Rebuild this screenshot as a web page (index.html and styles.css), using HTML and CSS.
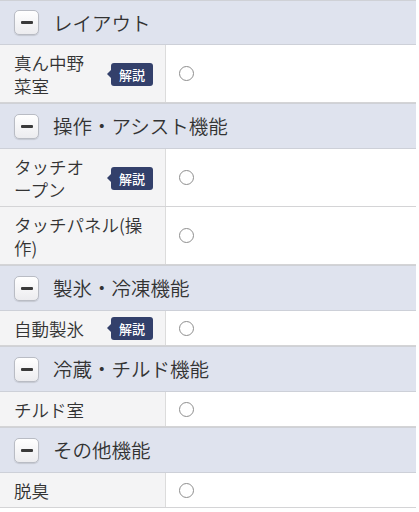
FILE: index.html
```html
<!DOCTYPE html>
<html lang="ja">
<head>
<meta charset="utf-8">
<link rel="stylesheet" href="styles.css">
</head>
<body>
<div class="spec">
  <div class="group">
    <div class="head"><span class="toggle"><span class="bar"></span></span><span class="title">レイアウト</span></div>
    <div class="row"><div class="label"><span class="name">真ん中野菜室</span><span class="badge">解説</span></div><div class="value"><span class="circle"></span></div></div>
  </div>
  <div class="group">
    <div class="head"><span class="toggle"><span class="bar"></span></span><span class="title">操作・アシスト機能</span></div>
    <div class="row"><div class="label"><span class="name">タッチオープン</span><span class="badge">解説</span></div><div class="value"><span class="circle"></span></div></div>
    <div class="row"><div class="label"><span class="name">タッチパネル(操作)</span></div><div class="value"><span class="circle"></span></div></div>
  </div>
  <div class="group">
    <div class="head"><span class="toggle"><span class="bar"></span></span><span class="title">製氷・冷凍機能</span></div>
    <div class="row"><div class="label"><span class="name">自動製氷</span><span class="badge">解説</span></div><div class="value"><span class="circle"></span></div></div>
  </div>
  <div class="group">
    <div class="head"><span class="toggle"><span class="bar"></span></span><span class="title">冷蔵・チルド機能</span></div>
    <div class="row"><div class="label"><span class="name">チルド室</span></div><div class="value"><span class="circle"></span></div></div>
  </div>
  <div class="group">
    <div class="head"><span class="toggle"><span class="bar"></span></span><span class="title">その他機能</span></div>
    <div class="row"><div class="label"><span class="name">脱臭</span></div><div class="value"><span class="circle"></span></div></div>
  </div>
</div>
</body>
</html>
```
FILE: styles.css
```css
html, body {
  margin: 0;
  padding: 0;
  background: #ffffff;
}
body {
  font-family: "Noto Sans CJK JP", "Noto Sans", sans-serif;
  color: #333333;
}
.spec {
  width: 416px;
  border-top: 1px solid #cfd1d6;
}
.head {
  display: flex;
  align-items: center;
  height: 44px;
  background: #dfe3ee;
  border-bottom: 1px solid #cdd0d8;
  padding-left: 14px;
  box-sizing: border-box;
}
.group + .group .head {
  border-top: 1px solid #cfd1d6;
  height: 46px;
}
.toggle {
  width: 25px;
  height: 25px;
  box-sizing: border-box;
  border: 1px solid #b9bcc4;
  border-radius: 5px;
  background: linear-gradient(#ffffff, #ececef);
  box-shadow: 0 1px 1px rgba(0,0,0,0.12);
  display: flex;
  align-items: center;
  justify-content: center;
  flex: none;
}
.bar {
  width: 12px;
  height: 3px;
  background: #3a3a3a;
  border-radius: 1px;
}
.title {
  margin-left: 14px;
  font-size: 19.5px;
  line-height: 24px;
  font-weight: 350;
  color: #333333;
}
.row {
  display: grid;
  grid-template-columns: 166px 1fr;
  border-bottom: 1px solid #d4d4d6;
}
.label {
  background: #f4f4f5;
  border-right: 1px solid #dcdcdc;
  display: flex;
  align-items: center;
  padding: 6px 12px 5px 14px;
  min-width: 0;
}
.name {
  font-size: 17.5px;
  line-height: 23px;
  font-weight: 350;
  flex: 0 1 auto;
  max-width: 140px;
}
.label .name:not(:last-child) {
  max-width: 84px;
}
.badge {
  margin-left: auto;
  position: relative;
  flex: none;
  width: 42px;
  height: 23px;
  box-sizing: border-box;
  background: #33406b;
  color: #ffffff;
  border-radius: 3px;
  font-size: 13px;
  font-weight: 500;
  line-height: 23px;
  text-align: center;
}
.badge::before {
  content: "";
  position: absolute;
  left: -4px;
  top: 7px;
  border-style: solid;
  border-width: 4.5px 4px 4.5px 0;
  border-color: transparent #33406b transparent transparent;
}
.value {
  display: flex;
  align-items: center;
  padding-left: 13px;
}
.circle {
  width: 15px;
  height: 15px;
  box-sizing: border-box;
  border: 1px solid #8e8e8e;
  border-radius: 50%;
}
```
